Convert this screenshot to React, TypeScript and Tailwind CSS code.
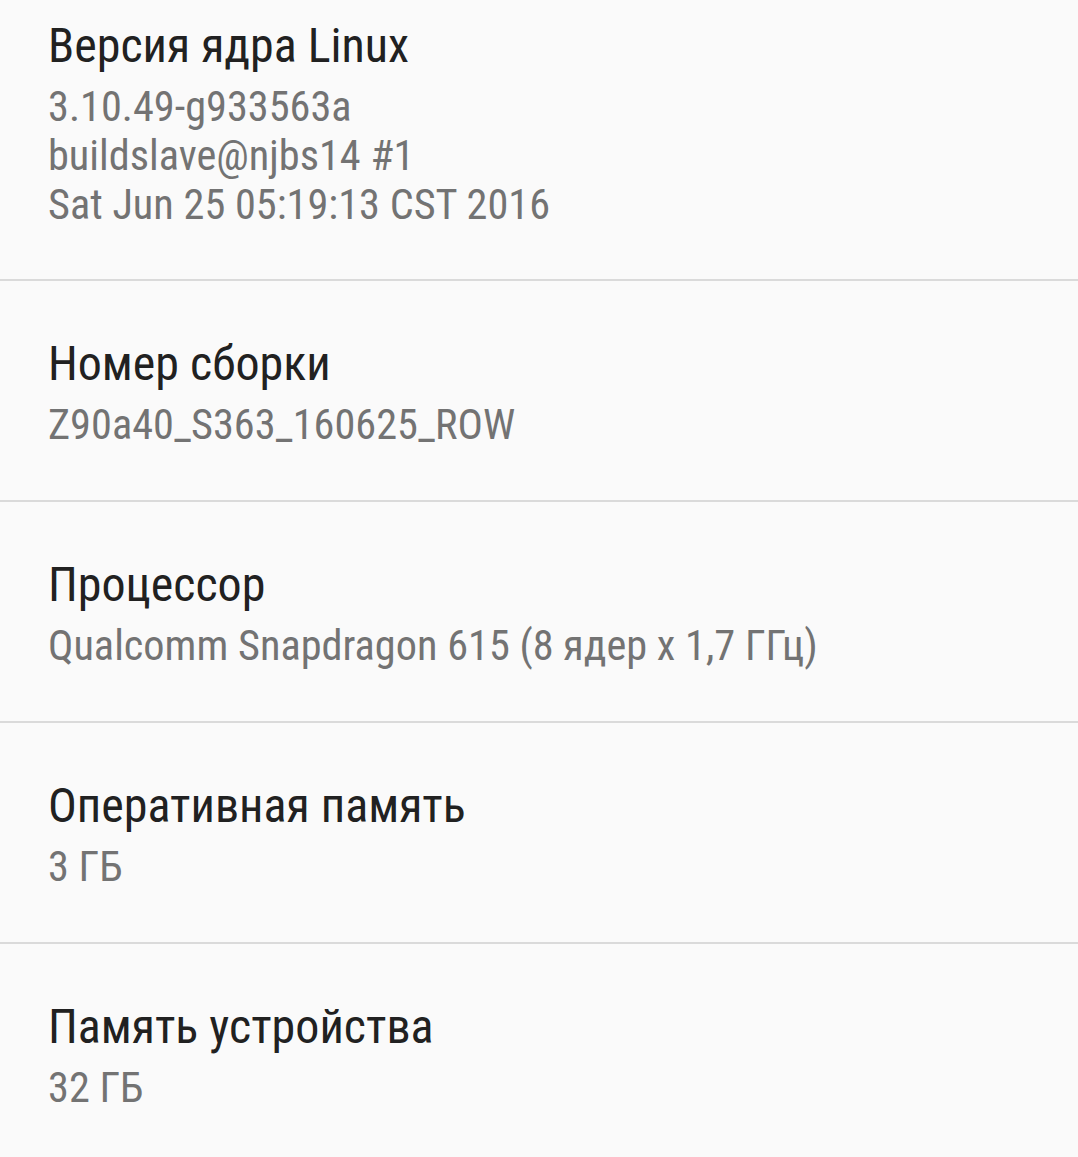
const items = [
  {
    title: "Версия ядра Linux",
    lines: ["3.10.49-g933563a", "buildslave@njbs14 #1", "Sat Jun 25 05:19:13 CST 2016"],
  },
  { title: "Номер сборки", lines: ["Z90a40_S363_160625_ROW"] },
  { title: "Процессор", lines: ["Qualcomm Snapdragon 615 (8 ядер x 1,7 ГГц)"] },
  { title: "Оперативная память", lines: ["3 ГБ"] },
  { title: "Память устройства", lines: ["32 ГБ"] },
];

function Row({ title, lines, first }: { title: string; lines: string[]; first?: boolean }) {
  return (
    <div className={first ? "pl-12 pr-6 pt-[18px] pb-[50px]" : "pl-12 pr-6 pt-[55px] pb-[51px]"}>
      <div className="text-[48px] leading-[56px] text-[#212121]">{title}</div>
      <div className="mt-2 text-[42.3px] leading-[49px] text-[#737373]">
        {lines.map((l) => (
          <div key={l}>{l}</div>
        ))}
      </div>
    </div>
  );
}

export default function App() {
  return (
    <div className="min-h-screen bg-[#fafafa] font-['Roboto',sans-serif] font-stretch-condensed">
      {items.map((it, i) => (
        <div key={it.title}>
          {i > 0 && <div className="h-[2px] bg-[#dadada]" />}
          <Row title={it.title} lines={it.lines} first={i === 0} />
        </div>
      ))}
    </div>
  );
}
